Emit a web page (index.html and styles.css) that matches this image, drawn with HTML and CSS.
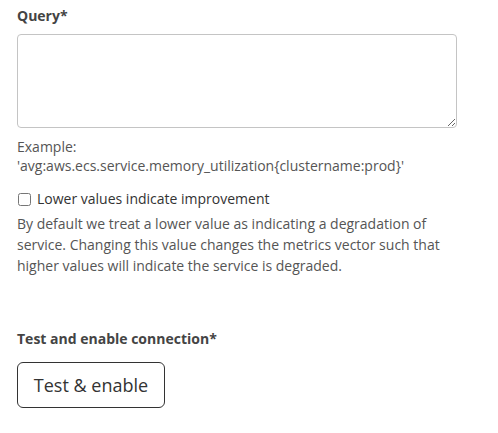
FILE: index.html
```html
<!DOCTYPE html>
<html>
<head>
<meta charset="utf-8">
<link rel="stylesheet" href="styles.css">
</head>
<body>
<div class="form">
  <div class="field">
    <label class="label" for="q">Query*</label>
    <textarea id="q" class="textarea"></textarea>
    <div class="hint">Example:<br>'avg:aws.ecs.service.memory_utilization{clustername:prod}'</div>
  </div>
  <div class="check-field">
    <label class="check">
      <input type="checkbox" class="checkbox">
      <span>Lower values indicate improvement</span>
    </label>
    <p class="desc">By default we treat a lower value as indicating a degradation of service. Changing this value changes the metrics vector such that higher values will indicate the service is degraded.</p>
  </div>
  <div class="field test">
    <div class="label">Test and enable connection*</div>
    <button class="btn">Test &amp; enable</button>
  </div>
</div>
</body>
</html>
```
FILE: styles.css
```css
html, body {
  margin: 0;
  padding: 0;
  background: #fff;
}
body {
  font-family: "Open Sans", sans-serif;
  font-size: 14px;
  color: #555;
}
.form {
  padding: 6px 0 0 17px;
  width: 440px;
}
.field {
  display: flex;
  flex-direction: column;
}
.label {
  font-weight: 700;
  color: #444;
  font-size: 14px;
  line-height: 20px;
  margin-bottom: 8px;
}
.textarea {
  box-sizing: border-box;
  width: 440px;
  height: 94px;
  border: 1px solid #c4c4c4;
  border-radius: 4px;
  margin: 0;
  resize: vertical;
  font-family: "Open Sans", sans-serif;
}
.hint {
  margin-top: 9px;
  line-height: 19px;
  font-size: 14px;
  color: #555;
}
.check-field {
  margin-top: 14px;
}
.check {
  display: flex;
  align-items: center;
  gap: 6px;
  color: #333;
  line-height: 20px;
}
.checkbox {
  width: 13px;
  height: 13px;
  margin: 0 0 0 1px;
}
.desc {
  margin: 4px 0 0;
  line-height: 21px;
  color: #555;
}
.test {
  margin-top: 53px;
}
.test .label {
  margin-bottom: 13px;
}
.btn {
  align-self: flex-start;
  box-sizing: border-box;
  width: 148px;
  height: 46px;
  background: #fff;
  border: 1px solid #333;
  border-radius: 6px;
  font-family: "Open Sans", sans-serif;
  font-size: 18px;
  color: #333;
  padding: 0;
  cursor: pointer;
}
```
